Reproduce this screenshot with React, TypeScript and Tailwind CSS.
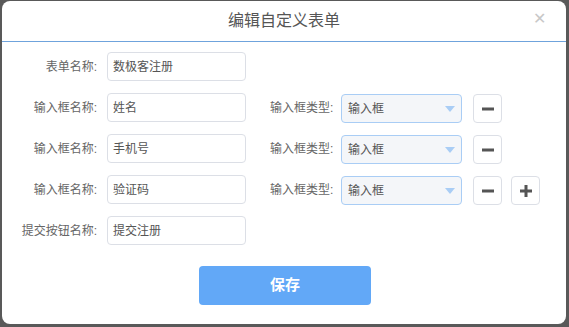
import React from 'react';

const fieldRows = [
  { name: '姓名', last: false },
  { name: '手机号', last: false },
  { name: '验证码', last: true },
];

function TextBox({ value }: { value: string }) {
  return (
    <div className="w-[139px] h-[29px] border border-[#dcdfe6] rounded-[4px] bg-white px-[5px] flex items-center text-[12px] text-[#555]">
      {value}
    </div>
  );
}

function Label({ text }: { text: string }) {
  return <span className="w-[105px] pr-[10px] text-right text-[12px] text-[#666] shrink-0">{text}</span>;
}

function IconButton({ plus }: { plus?: boolean }) {
  return (
    <button className="w-[29px] h-[29px] border border-[#dcdfe6] rounded-[4px] bg-white flex items-center justify-center">
      <svg width="12" height="12" viewBox="0 0 12 12">
        <rect x="0" y="4.5" width="12" height="3" fill="#555" />
        {plus && <rect x="4.5" y="0" width="3" height="12" fill="#555" />}
      </svg>
    </button>
  );
}

export default function App() {
  return (
    <div
      className="w-[569px] h-[327px] bg-[#595959] pl-[2px] pt-[1px] overflow-hidden"
      style={{ fontFamily: '"Liberation Sans", "Noto Sans CJK SC", sans-serif' }}
    >
      <div className="w-[564px] h-[323px] bg-white rounded-[8px] flex flex-col">
        {/* Header */}
        <div className="h-[41px] border-b border-[#6fa3dc] flex items-center justify-center relative shrink-0">
          <span className="text-[16px] text-[#555]">编辑自定义表单</span>
          <span className="absolute right-[20px] top-[10px] text-[#c8c8c8] text-[16px] leading-none">✕</span>
        </div>

        {/* Body */}
        <div className="pt-[10px] flex flex-col gap-[12px]">
          <div className="flex items-center">
            <Label text="表单名称:" />
            <TextBox value="数极客注册" />
          </div>

          {fieldRows.map((row) => (
            <div key={row.name} className="flex items-center h-[29px]">
              <Label text="输入框名称:" />
              <TextBox value={row.name} />
              <span className="ml-[24px] w-[71px] text-[12px] text-[#666]">输入框类型:</span>
              <div className="w-[121px] h-[29px] translate-y-[1px] border border-[#a9cdf5] rounded-[4px] bg-[#f4f6f9] px-[6px] flex items-center justify-between text-[12px] text-[#555]">
                <span>输入框</span>
                <svg width="10" height="6" viewBox="0 0 10 6">
                  <path d="M0 0 L10 0 L5 6 Z" fill="#a9cdf5" />
                </svg>
              </div>
              <div className="ml-[11px] flex gap-[9px] translate-y-[1px]">
                <IconButton />
                {row.last && <IconButton plus />}
              </div>
            </div>
          ))}

          <div className="flex items-center">
            <Label text="提交按钮名称:" />
            <TextBox value="提交注册" />
          </div>
        </div>

        {/* Footer */}
        <div className="pt-[21px] pl-[197px]">
          <button className="w-[172px] h-[39px] rounded-[4px] bg-[#62a8f7] text-white text-[15px] font-bold">保存</button>
        </div>
      </div>
    </div>
  );
}
